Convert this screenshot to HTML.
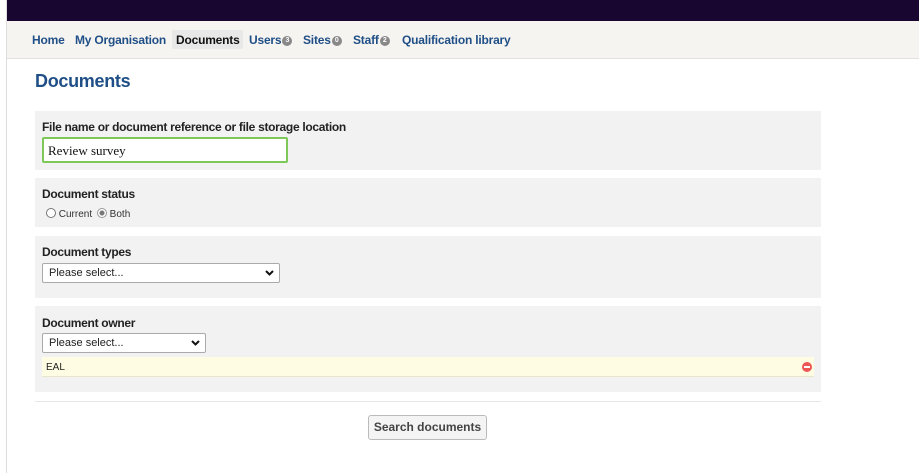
<!DOCTYPE html>
<html><head><meta charset="utf-8"><style>
*{margin:0;padding:0;box-sizing:border-box}
body{width:919px;height:473px;background:#fff;font-family:"Liberation Sans",sans-serif;position:relative;overflow:hidden}
.a{position:absolute}
.lbl{font-size:12px;font-weight:bold;color:#222;letter-spacing:-0.3px}
.panel{position:absolute;left:35px;width:786px;background:#f2f2f2}
.sel{position:absolute;background:#fff;border:1px solid #aaa;border-radius:2px;font-size:11px;color:#222;padding:3px 6px;height:20px}
.sel svg{position:absolute;right:5px;top:6px}
.nav a{position:absolute;top:33px;font-size:12px;font-weight:bold;color:#1f4f86;text-decoration:none;letter-spacing:-0.2px}
.badge{display:inline-block;width:10px;height:10px;border-radius:50%;background:#888;color:#fff;font-size:7px;line-height:10px;text-align:center;vertical-align:middle;margin-left:1px}
</style></head><body>
<div class="a" style="left:6px;top:0;width:1px;height:473px;background:#ddd"></div>
<div class="a" style="left:7px;top:0;width:912px;height:21px;background:#180530"></div>
<div class="a" style="left:7px;top:21px;width:912px;height:38px;background:#f6f4f1;border-bottom:1px solid #e4e2de"></div>
<div class="a" style="left:172px;top:30px;width:71px;height:19px;background:#e8e8e8;border-radius:2px"></div>
<div class="nav">
<a style="left:32px">Home</a>
<a style="left:75px">My Organisation</a>
<a style="left:176px;color:#111">Documents</a>
<a style="left:249px">Users<span class="badge">3</span></a>
<a style="left:303px">Sites<span class="badge">0</span></a>
<a style="left:353px">Staff<span class="badge">2</span></a>
<a style="left:402px">Qualification library</a>
</div>
<div class="a" style="left:35px;top:71px;font-size:18px;font-weight:bold;color:#1f4f86;letter-spacing:-0.3px">Documents</div>

<div class="panel" style="top:111px;height:59px">
<div class="a lbl" style="left:7px;top:9px">File name or document reference or file storage location</div>
<div class="a" style="left:7px;top:26px;width:246px;height:26px;background:#fff;border:2px solid #7ec85a;border-radius:2px;font-family:'Liberation Serif',serif;font-size:13px;padding:4px 4px;color:#111">Review survey</div>
</div>
<div class="panel" style="top:178px;height:49px">
<div class="a lbl" style="left:7px;top:9px">Document status</div>
<div class="a" style="left:11px;top:30px;font-size:10px;color:#333">
<span style="display:inline-block;width:10px;height:10px;border:1px solid #777;border-radius:50%;vertical-align:-1px;background:#fff"></span> Current
<span style="display:inline-block;width:10px;height:10px;border:1px solid #999;border-radius:50%;vertical-align:-1px;margin-left:2px;background:radial-gradient(#777 0 2px,#fff 3px)"></span> Both</div>
</div>
<div class="panel" style="top:236px;height:62px">
<div class="a lbl" style="left:7px;top:9px">Document types</div>
<div class="sel" style="left:7px;top:27px;width:238px">Please select...<svg width="9" height="6"><path d="M1 1L4.5 4.5L8 1" stroke="#111" stroke-width="2" fill="none"/></svg></div>
</div>
<div class="panel" style="top:306px;height:86px">
<div class="a lbl" style="left:7px;top:10px">Document owner</div>
<div class="sel" style="left:7px;top:27px;width:164px">Please select...<svg width="9" height="6"><path d="M1 1L4.5 4.5L8 1" stroke="#111" stroke-width="2" fill="none"/></svg></div>
<div class="a" style="left:7px;top:51px;width:772px;height:20px;background:#fefde3;border-bottom:1px solid #e8e6cc;font-size:10px;color:#222;padding:5px 4px">EAL</div>
<div class="a" style="left:767px;top:56px;width:10px;height:10px;border-radius:50%;background:#e55"><div style="position:absolute;left:2px;top:4px;width:6px;height:2px;background:#fff"></div></div>
</div>
<div class="a" style="left:35px;top:401px;width:786px;height:1px;background:#e6e6e6"></div>
<div class="a" style="left:368px;top:415px;width:119px;height:25px;background:#f4f4f4;border:1px solid #bbb;border-radius:3px;font-size:12px;font-weight:bold;color:#444;text-align:center;line-height:23px">Search documents</div>
</body></html>
